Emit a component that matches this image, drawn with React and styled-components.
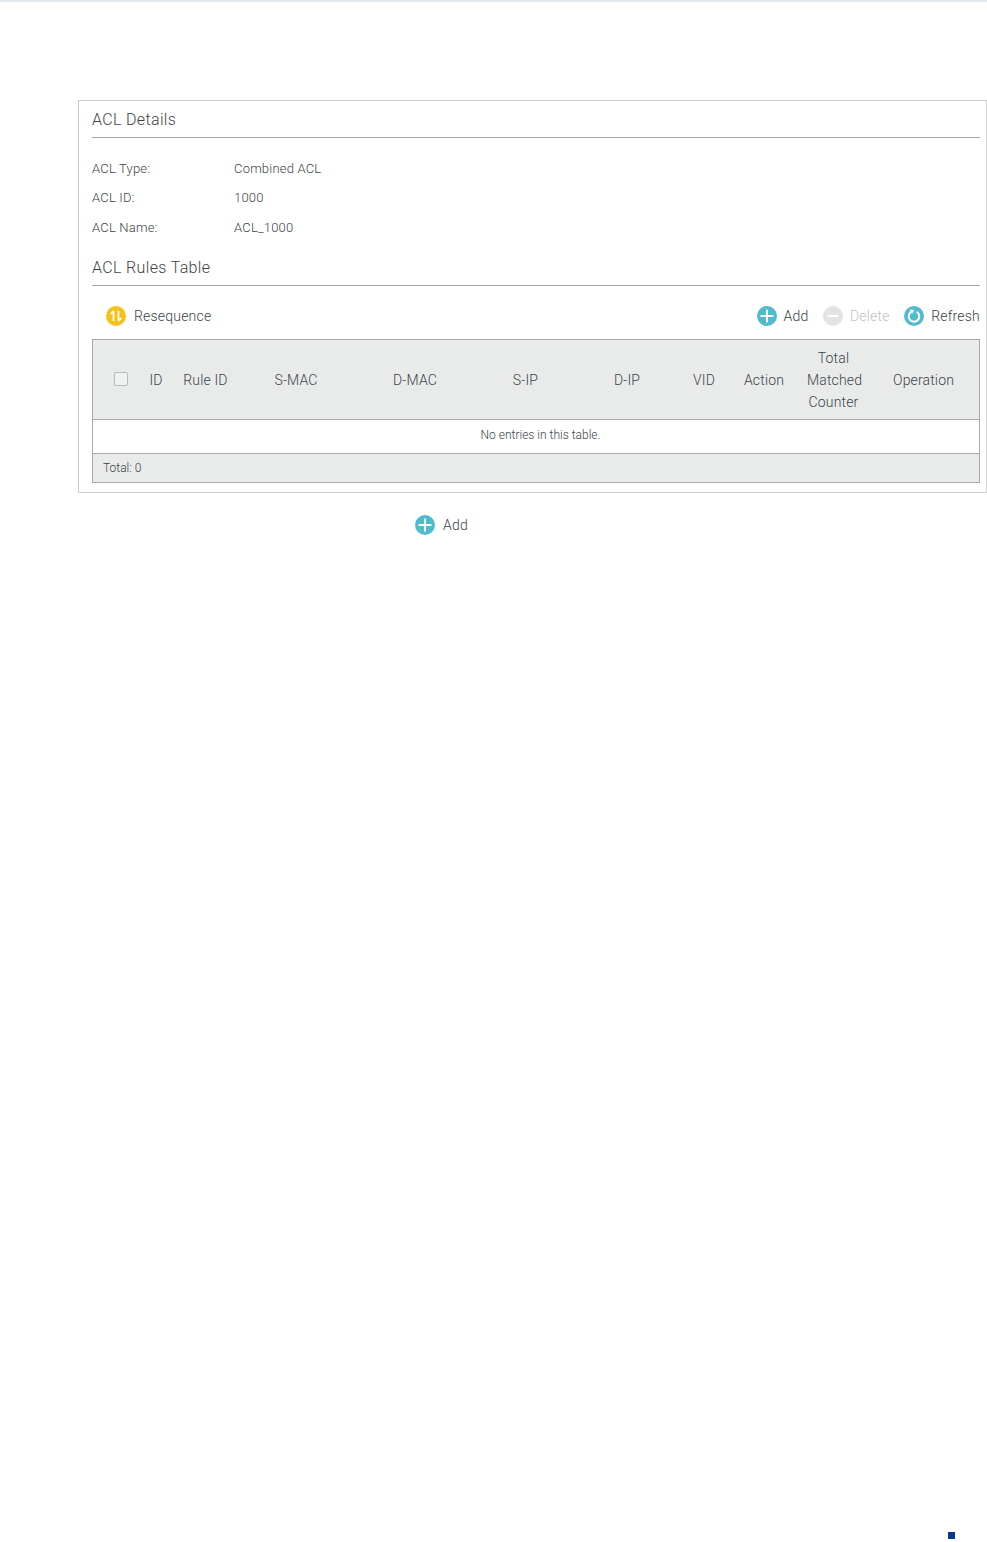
import React from 'react';
import styled, { createGlobalStyle } from 'styled-components';

const GlobalStyle = createGlobalStyle`
	html, body {
		margin: 0;
		padding: 0;
		background: #fff;
	}
	* {
		box-sizing: border-box;
	}
`;

const columns = [
	{ key: 'id', label: 'ID' },
	{ key: 'rule', label: 'Rule ID' },
	{ key: 'smac', label: 'S-MAC' },
	{ key: 'dmac', label: 'D-MAC' },
	{ key: 'sip', label: 'S-IP' },
	{ key: 'dip', label: 'D-IP' },
	{ key: 'vid', label: 'VID' },
	{ key: 'action', label: 'Action' },
	{ key: 'counter', label: 'Total Matched Counter' },
	{ key: 'op', label: 'Operation' },
];

const AddIcon = () => (
	<svg width="20" height="20" viewBox="0 0 20 20">
		<circle cx="10" cy="10" r="10" fill="#4fbccd" />
		<path d="M10 3.5v13M3.5 10h13" stroke="#fff" strokeWidth="2" />
	</svg>
);

const DeleteIcon = () => (
	<svg width="20" height="20" viewBox="0 0 20 20">
		<circle cx="10" cy="10" r="10" fill="#e2e3e3" />
		<path d="M4.5 10h11" stroke="#fff" strokeWidth="2" />
	</svg>
);

const RefreshIcon = () => (
	<svg width="20" height="20" viewBox="0 0 20 20">
		<circle cx="10" cy="10" r="10" fill="#4fbccd" />
		<path d="M7.2 5.9a5.3 5.3 0 1 0 5.4-.1" fill="none" stroke="#fff" strokeWidth="2" />
		<path d="M5.6 3.4l4.6.6-2.2 3.9z" fill="#fff" />
	</svg>
);

const ResequenceIcon = () => (
	<svg width="20" height="20" viewBox="0 0 20 20">
		<circle cx="10" cy="10" r="10" fill="#f5c21b" />
		<path d="M7.5 15V5.2M4.8 8l2.7-3M12.5 5v9.8M15.2 12l-2.7 3" fill="none" stroke="#fff" strokeWidth="1.7" />
	</svg>
);

const App = () => (
	<Page>
		<GlobalStyle />
		<TopLine />
		<Panel>
			<SectionTitle>ACL Details</SectionTitle>
			<Details>
				<DetailRow>
					<DetailLabel>ACL Type:</DetailLabel>
					<span>Combined ACL</span>
				</DetailRow>
				<DetailRow>
					<DetailLabel>ACL ID:</DetailLabel>
					<span>1000</span>
				</DetailRow>
				<DetailRow>
					<DetailLabel>ACL Name:</DetailLabel>
					<span>ACL_1000</span>
				</DetailRow>
			</Details>
			<SectionTitle>ACL Rules Table</SectionTitle>
			<Toolbar>
				<ResequenceButton>
					<ResequenceIcon />
					Resequence
				</ResequenceButton>
				<ToolGroup>
					<ToolButton>
						<AddIcon />
						Add
					</ToolButton>
					<ToolButton disabled>
						<DeleteIcon />
						Delete
					</ToolButton>
					<ToolButton>
						<RefreshIcon />
						Refresh
					</ToolButton>
				</ToolGroup>
			</Toolbar>
			<Table>
				<HeaderRow>
					<CheckCell>
						<CheckBox />
					</CheckCell>
					{columns.map(col => (
						<HeaderCell key={col.key} $wrap={col.key === 'counter'}>
							{col.label}
						</HeaderCell>
					))}
				</HeaderRow>
				<EmptyRow>No entries in this table.</EmptyRow>
				<FooterRow>Total: 0</FooterRow>
			</Table>
		</Panel>
		<OuterAdd>
			<AddIcon />
			Add
		</OuterAdd>
		<PageFoot>
			<Marker />
		</PageFoot>
	</Page>
);

export default App;

const Page = styled.div`
	height: 1542px;
	display: flex;
	flex-direction: column;
	overflow: hidden;
	font-family: Roboto, 'Liberation Sans', Arial, sans-serif;
	font-size: 14px;
	font-weight: 300;
	letter-spacing: 0.2px;
	color: #3a4449;
`;

const TopLine = styled.div`
	height: 2px;
	background-color: #e3e8ed;
`;

const Panel = styled.div`
	margin: 98px 0 0 78px;
	height: 393px;
	padding: 0 6px 0 13px;
	border: 1px solid #cccccc;
	border-right-color: #d4d4d4;
`;

const SectionTitle = styled.div`
	height: 37px;
	padding-top: 8px;
	line-height: 21px;
	font-size: 16px;
	letter-spacing: 0.35px;
	color: #3f4346;
	border-bottom: 1px solid #a9a9a9;
`;

const Details = styled.div`
	padding-top: 15.8px;
	height: 111px;
`;

const DetailRow = styled.div`
	display: flex;
	height: 29.5px;
	line-height: 29px;
	font-size: 13px;
`;

const DetailLabel = styled.span`
	width: 142px;
`;

const Toolbar = styled.div`
	display: flex;
	justify-content: space-between;
	align-items: center;
	height: 53px;
	padding-top: 7px;
`;

const ToolGroup = styled.div`
	display: flex;
	gap: 14.5px;
`;

const ToolButton = styled.div`
	display: flex;
	align-items: center;
	gap: 7px;
	color: ${props => (props.disabled ? '#bfc3c4' : '#3a4449')};
`;

const ResequenceButton = styled(ToolButton)`
	margin-left: 14px;
	gap: 8px;
`;

const Table = styled.div`
	border: 1px solid #a9a9a9;
`;

const HeaderRow = styled.div`
	display: grid;
	grid-template-columns: 46px 34px 65px 116px 122px 99px 104px 50px 70px 69px 111px;
	align-items: center;
	height: 80px;
	background-color: #e9ebeb;
	border-bottom: 1px solid #a9a9a9;
`;

const HeaderCell = styled.div`
	text-align: center;
	line-height: 22px;
	letter-spacing: 0.15px;
	padding: ${props => (props.$wrap ? '0 8px' : '0')};
`;

const CheckCell = styled.div`
	display: flex;
	justify-content: center;
	padding-left: 10px;
	margin-top: -2px;
`;

const CheckBox = styled.div`
	width: 14px;
	height: 14px;
	border: 1px solid #b9bcbc;
	border-radius: 2px;
	background-color: #f1f2f2;
`;

const EmptyRow = styled.div`
	height: 34px;
	line-height: 30px;
	padding-left: 9px;
	text-align: center;
	font-size: 12px;
	letter-spacing: 0;
	background-color: #fff;
	border-bottom: 1px solid #a9a9a9;
`;

const FooterRow = styled.div`
	height: 28px;
	line-height: 28px;
	padding-left: 10px;
	font-size: 12px;
	letter-spacing: 0;
	background-color: #e9ebeb;
`;

const OuterAdd = styled(ToolButton)`
	margin: 22px 0 0 415px;
	gap: 8px;
`;

const PageFoot = styled.div`
	margin-top: auto;
	padding: 0 32px 3px 0;
	display: flex;
	justify-content: flex-end;
`;

const Marker = styled.div`
	width: 7px;
	height: 7px;
	background-color: #0b3a8c;
`;
